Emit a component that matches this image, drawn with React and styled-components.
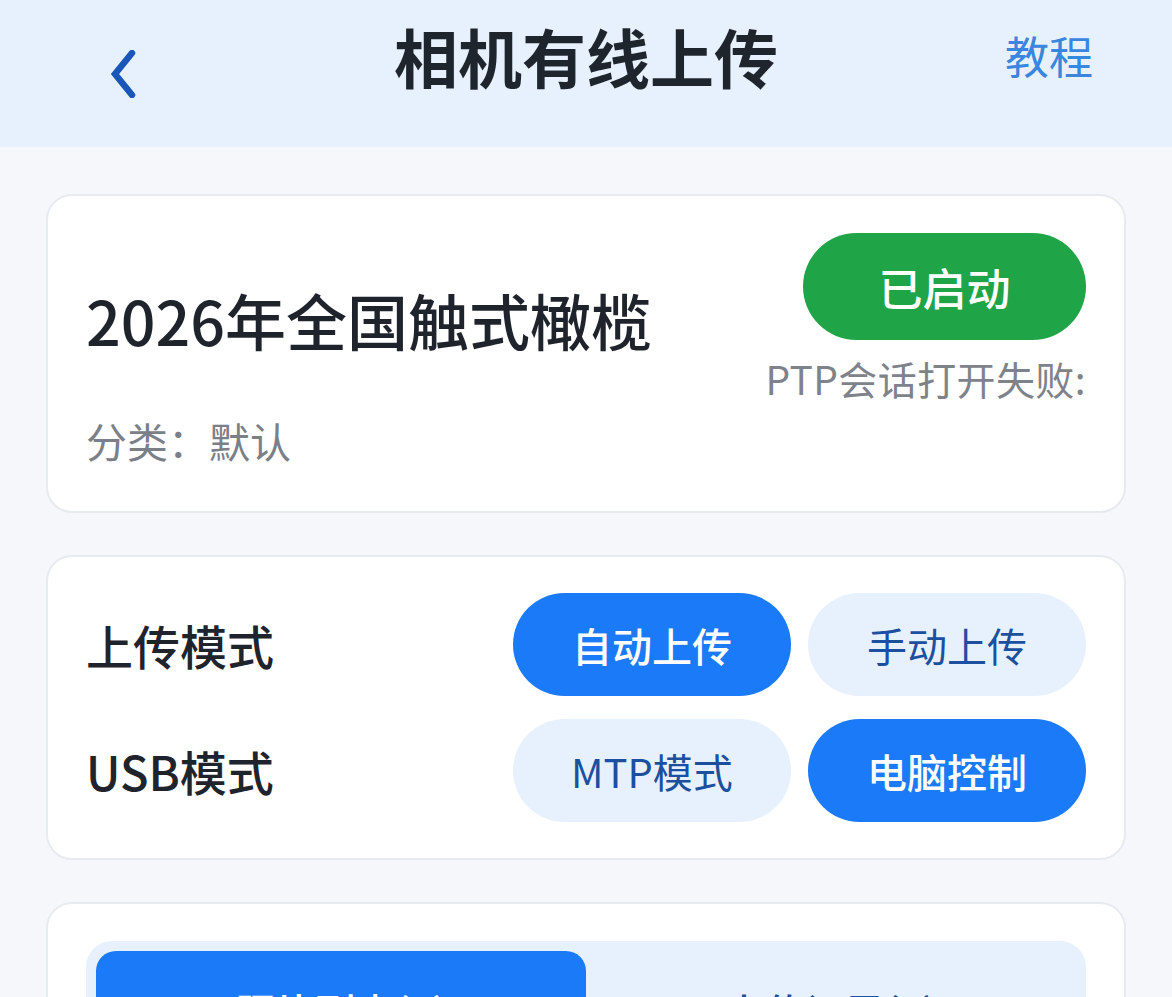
import React, { useState } from "react";
import styled, { createGlobalStyle } from "styled-components";

const GlobalStyle = createGlobalStyle`
  * { box-sizing: border-box; }
  body {
    margin: 0;
    background: #f5f7fb;
    font-family: "Noto Sans CJK SC", "Noto Sans", sans-serif;
  }
`;

function App() {
  const [uploadMode, setUploadMode] = useState("auto");
  const [usbMode, setUsbMode] = useState("pc");
  const [tab, setTab] = useState("photos");

  return (
    <>
      <GlobalStyle />
      <Header>
        <BackButton aria-label="返回">
          <svg width="30" height="48" viewBox="0 0 30 48" fill="none">
            <path
              d="M24 3 L7 24 L24 45"
              stroke="#1a56b8"
              strokeWidth="6.5"
              strokeLinecap="round"
              strokeLinejoin="miter"
            />
          </svg>
        </BackButton>
        <HeaderTitle>相机有线上传</HeaderTitle>
        <HeaderLink>教程</HeaderLink>
      </Header>

      <Content>
        <Card>
          <InfoRow>
            <InfoLeft>
              <EventTitle>2026年全国触式橄榄</EventTitle>
              <Category>分类：默认</Category>
            </InfoLeft>
            <InfoRight>
              <StatusButton>已启动</StatusButton>
              <ErrorText>PTP会话打开失败:</ErrorText>
            </InfoRight>
          </InfoRow>
        </Card>

        <Card $tight>
          <ModeList>
            <ModeRow>
              <ModeLabel>上传模式</ModeLabel>
              <PillButton
                $active={uploadMode === "auto"}
                onClick={() => setUploadMode("auto")}
              >
                自动上传
              </PillButton>
              <PillButton
                $active={uploadMode === "manual"}
                onClick={() => setUploadMode("manual")}
              >
                手动上传
              </PillButton>
            </ModeRow>
            <ModeRow>
              <ModeLabel>USB模式</ModeLabel>
              <PillButton
                $active={usbMode === "mtp"}
                onClick={() => setUsbMode("mtp")}
              >
                MTP模式
              </PillButton>
              <PillButton
                $active={usbMode === "pc"}
                onClick={() => setUsbMode("pc")}
              >
                电脑控制
              </PillButton>
            </ModeRow>
          </ModeList>
        </Card>

        <Card>
          <Tabs>
            <Tab $active={tab === "photos"} onClick={() => setTab("photos")}>
              照片列表(0)
            </Tab>
            <Tab $active={tab === "queue"} onClick={() => setTab("queue")}>
              上传记录(0)
            </Tab>
          </Tabs>
        </Card>
      </Content>
    </>
  );
}

export default App;

const Header = styled.header`
  height: 147px;
  background: #e6f1fd;
  display: grid;
  grid-template-columns: 1fr auto 1fr;
  align-items: start;
  padding: 0 79px;
`;

const BackButton = styled.button`
  justify-self: start;
  margin: 50px 0 0 29px;
  padding: 0;
  border: none;
  background: none;
  display: flex;
  cursor: pointer;
`;

const HeaderTitle = styled.h1`
  margin: 15px 0 0;
  font-size: 64px;
  font-weight: 700;
  line-height: 80px;
  color: #1f252d;
`;

const HeaderLink = styled.a`
  justify-self: end;
  margin-top: 25px;
  font-size: 44px;
  line-height: 60px;
  color: #3a85de;
  cursor: pointer;
`;

const Content = styled.main`
  padding: 47px 46px;
  display: flex;
  flex-direction: column;
  gap: 42px;
`;

const Card = styled.section`
  background: #ffffff;
  border: 2px solid #e7eaef;
  border-radius: 26px;
  padding: ${(p) => (p.$tight ? "36px 38px" : "37px 38px")};
`;

const InfoRow = styled.div`
  display: flex;
  justify-content: space-between;
  padding-bottom: 8px;
`;

const InfoLeft = styled.div`
  display: flex;
  flex-direction: column;
`;

const EventTitle = styled.div`
  margin-top: 48px;
  font-size: 61px;
  font-weight: 500;
  line-height: 78px;
  color: #1f242c;
`;

const Category = styled.div`
  margin-top: 55px;
  font-size: 41px;
  line-height: 52px;
  color: #7b8088;
`;

const InfoRight = styled.div`
  display: flex;
  flex-direction: column;
  align-items: flex-end;
`;

const StatusButton = styled.button`
  width: 283px;
  height: 107px;
  border: none;
  border-radius: 54px;
  background: #1fa447;
  color: #ffffff;
  font-family: inherit;
  font-size: 44px;
  font-weight: 500;
  cursor: pointer;
`;

const ErrorText = styled.div`
  margin-top: 14px;
  font-size: 39px;
  line-height: 49px;
  letter-spacing: 0.4px;
  color: #7e838b;
`;

const ModeList = styled.div`
  display: flex;
  flex-direction: column;
  gap: 23px;
`;

const ModeRow = styled.div`
  display: flex;
  align-items: center;
  gap: 17px;
`;

const ModeLabel = styled.div`
  flex: 1;
  font-size: 47px;
  font-weight: 500;
  color: #1f242c;
`;

const PillButton = styled.button`
  width: 278px;
  height: 103px;
  border: none;
  border-radius: 52px;
  background: ${(p) => (p.$active ? "#1b7af8" : "#e6f1fd")};
  color: ${(p) => (p.$active ? "#ffffff" : "#1d4f9f")};
  font-family: inherit;
  font-size: 40px;
  font-weight: ${(p) => (p.$active ? 500 : 400)};
  cursor: pointer;
`;

const Tabs = styled.div`
  display: grid;
  grid-template-columns: 1fr 1fr;
  padding: 10px;
  border-radius: 26px;
  background: #e6f1fd;
`;

const Tab = styled.button`
  height: 120px;
  border: none;
  border-radius: 20px;
  background: ${(p) => (p.$active ? "#1b7af8" : "transparent")};
  color: ${(p) => (p.$active ? "#ffffff" : "#1d4f9f")};
  font-family: inherit;
  font-size: 40px;
  font-weight: 500;
  cursor: pointer;
`;
